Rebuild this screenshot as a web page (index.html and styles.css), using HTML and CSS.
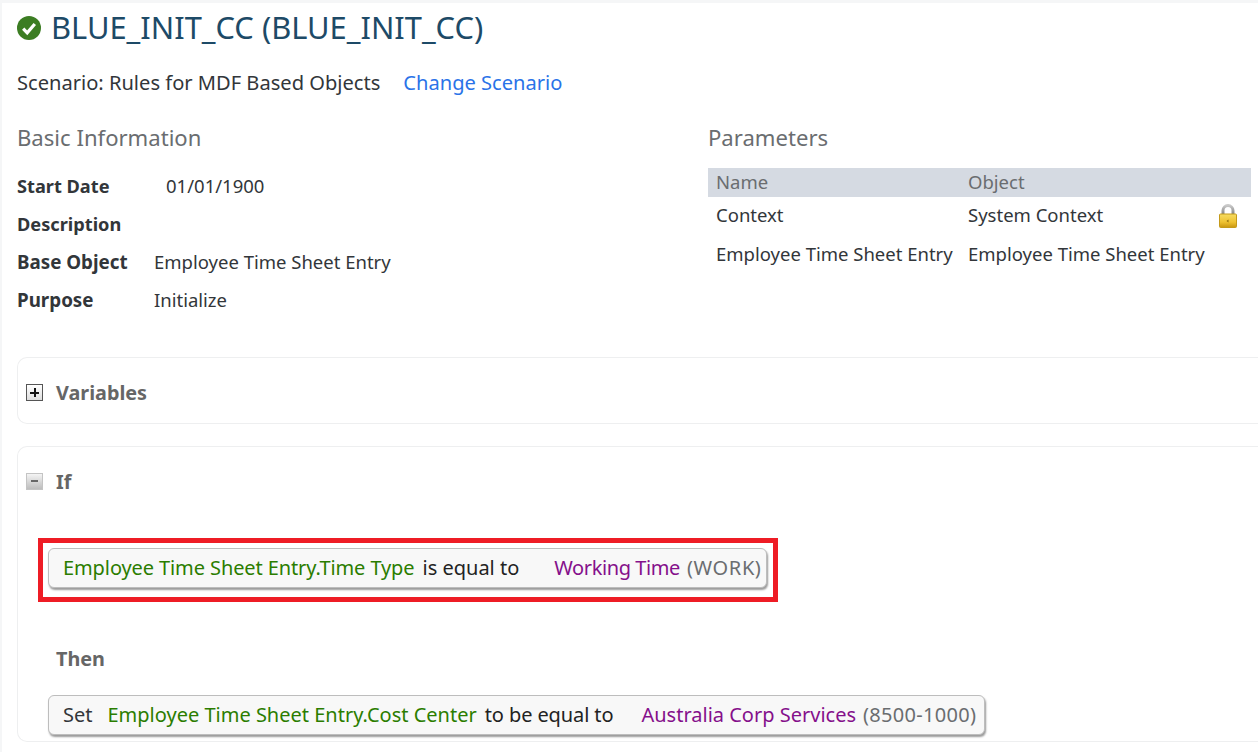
FILE: index.html
```html
<!DOCTYPE html>
<html lang="en">
<head>
<meta charset="utf-8">
<title>BLUE_INIT_CC</title>
<link rel="stylesheet" href="styles.css">
</head>
<body>
<main class="page">
  <header class="title-row">
    <svg class="status-icon" viewBox="0 0 24 24" width="24" height="24" aria-hidden="true">
      <circle cx="12" cy="12" r="12" fill="#3c7d23"/>
      <path d="M6.2 12.6l4 4.2 7.6-8.8" fill="none" stroke="#fff" stroke-width="3.2"/>
    </svg>
    <h1 class="title">BLUE_INIT_CC (BLUE_INIT_CC)</h1>
  </header>
  <div class="scenario-row">
    <span>Scenario: Rules for MDF Based Objects</span>
    <a class="link" href="#">Change Scenario</a>
  </div>
  <div class="info-columns">
    <section class="basic">
      <h2 class="section-title">Basic Information</h2>
      <div class="field field-date"><span class="label">Start Date</span><span>01/01/1900</span></div>
      <div class="field"><span class="label">Description</span></div>
      <div class="field field-wide"><span class="label">Base Object</span><span>Employee Time Sheet Entry</span></div>
      <div class="field field-wide"><span class="label">Purpose</span><span>Initialize</span></div>
    </section>
    <section class="params">
      <h2 class="section-title">Parameters</h2>
      <div class="param-head"><span>Name</span><span>Object</span></div>
      <div class="param-row"><span>Context</span><span>System Context</span>
        <svg class="lock" viewBox="0 0 20 24" width="20" height="24" aria-hidden="true">
          <defs>
            <linearGradient id="lockbody" x1="0" y1="0" x2="0" y2="1"><stop offset="0" stop-color="#f6dc62"/><stop offset="0.6" stop-color="#eec232"/><stop offset="1" stop-color="#c9960f"/></linearGradient>
            <linearGradient id="shackle" x1="0" y1="0" x2="0" y2="1"><stop offset="0" stop-color="#c8c8c8"/><stop offset="1" stop-color="#7f7f7f"/></linearGradient>
          </defs>
          <path d="M5 11V6.5a5 5 0 0 1 10 0V11" fill="none" stroke="url(#shackle)" stroke-width="3"/>
          <rect x="1.5" y="10" width="17" height="13.5" rx="1" fill="url(#lockbody)" stroke="#c49a1a" stroke-width="1"/>
          <path d="M10.5 15.5l-2 1.5 2 1.5z" fill="#8f6c0e"/>
        </svg>
      </div>
      <div class="param-row"><span>Employee Time Sheet Entry</span><span>Employee Time Sheet Entry</span></div>
    </section>
  </div>
  <section class="panel panel-variables">
    <div class="panel-head">
      <span class="toggle toggle-plus" aria-hidden="true"></span>
      <h3 class="panel-title">Variables</h3>
    </div>
  </section>
  <section class="panel panel-if">
    <div class="panel-head">
      <span class="toggle toggle-minus" aria-hidden="true"></span>
      <h3 class="panel-title">If</h3>
    </div>
    <div class="highlight">
      <div class="chip"><span class="green tight">Employee Time Sheet Entry.Time Type</span><span class="dark gap-s">is equal to</span><span class="purple gap-l tighter">Working Time</span><span class="grey gap-xs wide">(WORK)</span></div>
    </div>
    <h3 class="panel-title then">Then</h3>
    <div class="chip chip-set"><span class="slate">Set</span><span class="green gap-m">Employee Time Sheet Entry.Cost Center</span><span class="dark gap-s tight">to be equal to</span><span class="purple gap-k">Australia Corp Services</span><span class="grey gap-xs wide-s">(8500-1000)</span></div>
  </section>
</main>
</body>
</html>
```
FILE: styles.css
```css
* { box-sizing: border-box; }
html, body { margin: 0; height: 100%; }
body {
  background: #f5f6f7;
  font-family: "Noto Sans", "Open Sans", sans-serif;
  font-size: 18.5px;
  color: #32363a;
  overflow: hidden;
  padding: 3px 0 0 2px;
}
.page { background: #fff; height: 749px; padding-left: 15px; overflow: hidden; }
.title-row { display: flex; align-items: center; gap: 10px; height: 50px; }
.status-icon { flex: none; }
.title { margin: 0 0 2px; font-size: 30.85px; font-weight: 400; color: #1d4a67; line-height: 48px; }
.scenario-row { display: flex; gap: 23px; height: 24px; line-height: 24px; margin-top: 18px; font-size: 20.1px; }
.link { color: #2a73e8; text-decoration: none; }
.info-columns { display: flex; margin-top: 27px; }
.basic { width: 691px; flex: none; }
.params { width: 543px; flex: none; }
.section-title { margin: 0 0 15px; font-size: 22.1px; font-weight: 400; color: #6a6d70; line-height: 30px; }
.params .section-title { margin-bottom: 16px; }
.field { display: flex; height: 38px; line-height: 38px; }
.label { font-weight: 700; font-size: 18.2px; }
.field-date .label { width: 149px; }
.field-wide .label { width: 137px; font-size: 18.8px; }
.param-head, .param-row { display: grid; grid-template-columns: 252px 1fr auto; padding-left: 8px; }
.param-head { background: #d5dae2; color: #6a6d70; height: 29px; line-height: 27px; }
.param-row { height: 39px; line-height: 35px; align-items: center; padding: 0 13px 4px 8px; }
.lock { display: block; margin-bottom: -2px; }
.panel { border: 1px solid #eeeff0; border-right: 0; border-radius: 10px 0 0 10px; background: #fff; padding-left: 8px; }
.panel-variables { height: 67px; margin-top: 38px; padding-top: 4px; display: flex; align-items: center; }
.panel-if { height: 296px; margin-top: 22px; padding-top: 21px; }
.panel-head { display: flex; align-items: center; gap: 13px; height: 26px; }
.panel-title { margin: 0; font-size: 19.8px; font-weight: 700; color: #666; }
.toggle { width: 17px; height: 17px; border: 1px solid #555; background: linear-gradient(#fff, #ddd); position: relative; flex: none; }
.toggle::before { content: ""; position: absolute; left: 3px; right: 3px; top: 6.5px; height: 2px; background: #111; }
.toggle-plus::after { content: ""; position: absolute; top: 3px; bottom: 3px; left: 6.5px; width: 2px; background: #111; }
.toggle-minus { border-color: #c4c4c4; background: linear-gradient(#f4f4f4, #bdbdbd); }
.toggle-minus::before { background: #666; left: 4px; right: 4px; }
.highlight { width: 740px; height: 64px; margin: 44px 0 0 12px; border: 5px solid #ee1c25; padding: 5px; }
.chip { display: flex; align-items: center; height: 40px; padding: 0 0 2px 14px; background: #f8f8f8; border: 1px solid #bdbdbd; border-radius: 6px; box-shadow: 1px 2px 2px #9a9a9a; white-space: nowrap; font-size: 20px; }
.highlight .chip { width: 719px; }
.then { margin: 44px 0 0 30px; line-height: 26px; }
.chip-set { width: 937px; margin: 23px 0 0 22px; }
.green { color: #2b7d00; }
.purple { color: #85108b; }
.grey { color: #6a6d70; }
.dark { color: #222; }
.slate { color: #32363a; }
.tight { letter-spacing: -0.1px; }
.tighter { letter-spacing: -0.4px; }
.wide { letter-spacing: 0.6px; }
.wide-s { letter-spacing: 0.3px; }
.gap-xs { margin-left: 7px; }
.gap-s { margin-left: 8px; }
.gap-m { margin-left: 15px; }
.gap-l { margin-left: 35px; }
.gap-k { margin-left: 28px; }
```
